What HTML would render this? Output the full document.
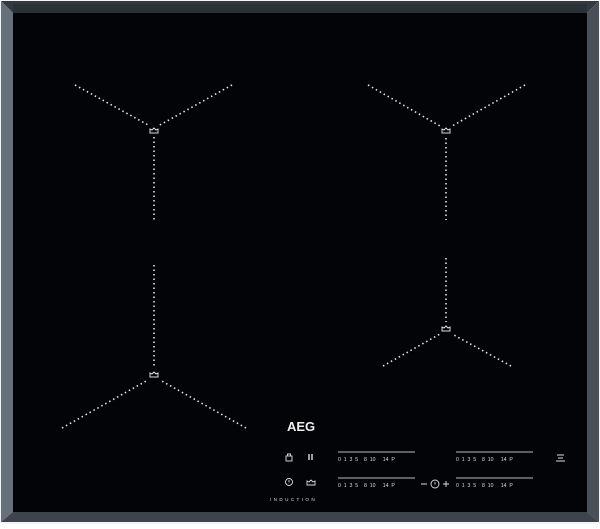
<!DOCTYPE html><html><head><style>
html,body{margin:0;padding:0;background:#fff}
</style></head><body>
<svg width="600" height="524" viewBox="0 0 600 524" xmlns="http://www.w3.org/2000/svg" font-family="Liberation Sans, sans-serif">
<rect x="0" y="0" width="600" height="524" fill="#f4f4f4"/>
<polygon points="1,1 599,1 587,13 13,13" fill="#353a42"/>
<polygon points="1,1 13,13 13,512 1,522" fill="#66707a"/>
<polygon points="599,1 599,522 587,512 587,13" fill="#4a5058"/>
<polygon points="1,522 13,512 587,512 599,522" fill="#3e444c"/>
<rect x="13" y="13" width="574" height="499" fill="#020407"/>
<rect x="13" y="4" width="574" height="9" fill="#2c3138"/>
<g stroke="#e4e4e4" stroke-width="1.6" stroke-dasharray="1.5 3" fill="none">
<path d="M75 85L150 126M232 85L158 126M154 137V222"/>
<path d="M368 85L440 126M525 85L452 126M446 138V220"/>
<path d="M154 265V366M62 428L148 380M246 428L160 380"/>
<path d="M446 258V322M383 366L440 334M511 366L452 334"/>
</g>
<g stroke="#ddd" stroke-width="1" fill="none">
<path d="M150 133h8v-4l-2 1-2-2-2 2-2-1z"/>
<path d="M442 133h8v-4l-2 1-2-2-2 2-2-1z"/>
<path d="M150 377h8v-4l-2 1-2-2-2 2-2-1z"/>
<path d="M442 331h8v-4l-2 1-2-2-2 2-2-1z"/>
</g>
<text x="287" y="431" fill="#eee" font-size="13" font-weight="bold">AEG</text>
<g stroke="#ddd" fill="none" stroke-width="0.9">
<rect x="286" y="456" width="6" height="5"/><path d="M287.5 456v-2h3v2"/>
<path d="M309 454v6M312 454v6" stroke-width="1.4"/>
<circle cx="289" cy="482" r="3.5"/><path d="M289 480v2.5"/>
<path d="M307 485h8v-4l-2 1-2-2-2 2-2-1z"/>
<path d="M557 455h7M558 458h5M556 461h9"/>
<path d="M338 452h77M456 452h77M338 478h77M456 478h77" stroke="#bbb"/>
<path d="M421 484h6M443 484h6M446 481v6"/><circle cx="435" cy="484" r="4"/><path d="M435 482v2.5"/>
</g>
<g fill="#ddd" font-size="5.2">
<text x="338" y="461" xml:space="preserve">0  1  3  5    8  10     14  P</text>
<text x="456" y="461" xml:space="preserve">0  1  3  5    8  10     14  P</text>
<text x="338" y="487" xml:space="preserve">0  1  3  5    8  10     14  P</text>
<text x="456" y="487" xml:space="preserve">0  1  3  5    8  10     14  P</text>
<text x="270" y="501" font-size="4.6" letter-spacing="2.4">INDUCTION</text>
</g>
</svg>
</body></html>
